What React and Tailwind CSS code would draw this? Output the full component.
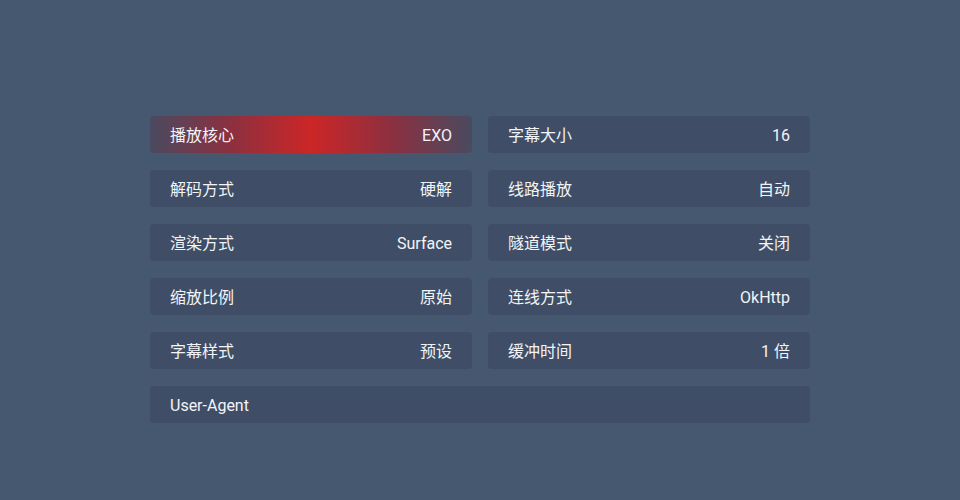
import React from "react";

const rows = [
  ["播放核心", "EXO", "字幕大小", "16"],
  ["解码方式", "硬解", "线路播放", "自动"],
  ["渲染方式", "Surface", "隧道模式", "关闭"],
  ["缩放比例", "原始", "连线方式", "OkHttp"],
  ["字幕样式", "预设", "缓冲时间", "1 倍"],
];

function Card({ label, value, active }) {
  return (
    <div
      className={
        "h-[37px] rounded-[4px] flex items-center justify-between pl-[20px] pr-[20px] pt-[2px] text-[16px] text-[#f2f4f7] " +
        (active
          ? "bg-[linear-gradient(to_right,#4a4a60_0%,#8c3040_25%,#cc2626_50%,#8c3040_75%,#4a4a60_100%)]"
          : "bg-[#3f4e66]")
      }
    >
      <span>{label}</span>
      <span>{value}</span>
    </div>
  );
}

export default function App() {
  return (
    <div
      className="w-[960px] h-[500px] bg-[#465770] pt-[116px] pl-[150px]"
      style={{ fontFamily: "Roboto, 'Noto Sans CJK SC', sans-serif" }}
    >
      <div className="w-[660px] grid grid-cols-2 gap-x-[16px] gap-y-[17px]">
        {rows.map((r, i) => (
          <React.Fragment key={i}>
            <Card label={r[0]} value={r[1]} active={i === 0} />
            <Card label={r[2]} value={r[3]} />
          </React.Fragment>
        ))}
        <div className="col-span-2">
          <Card label="User-Agent" value="" />
        </div>
      </div>
    </div>
  );
}
